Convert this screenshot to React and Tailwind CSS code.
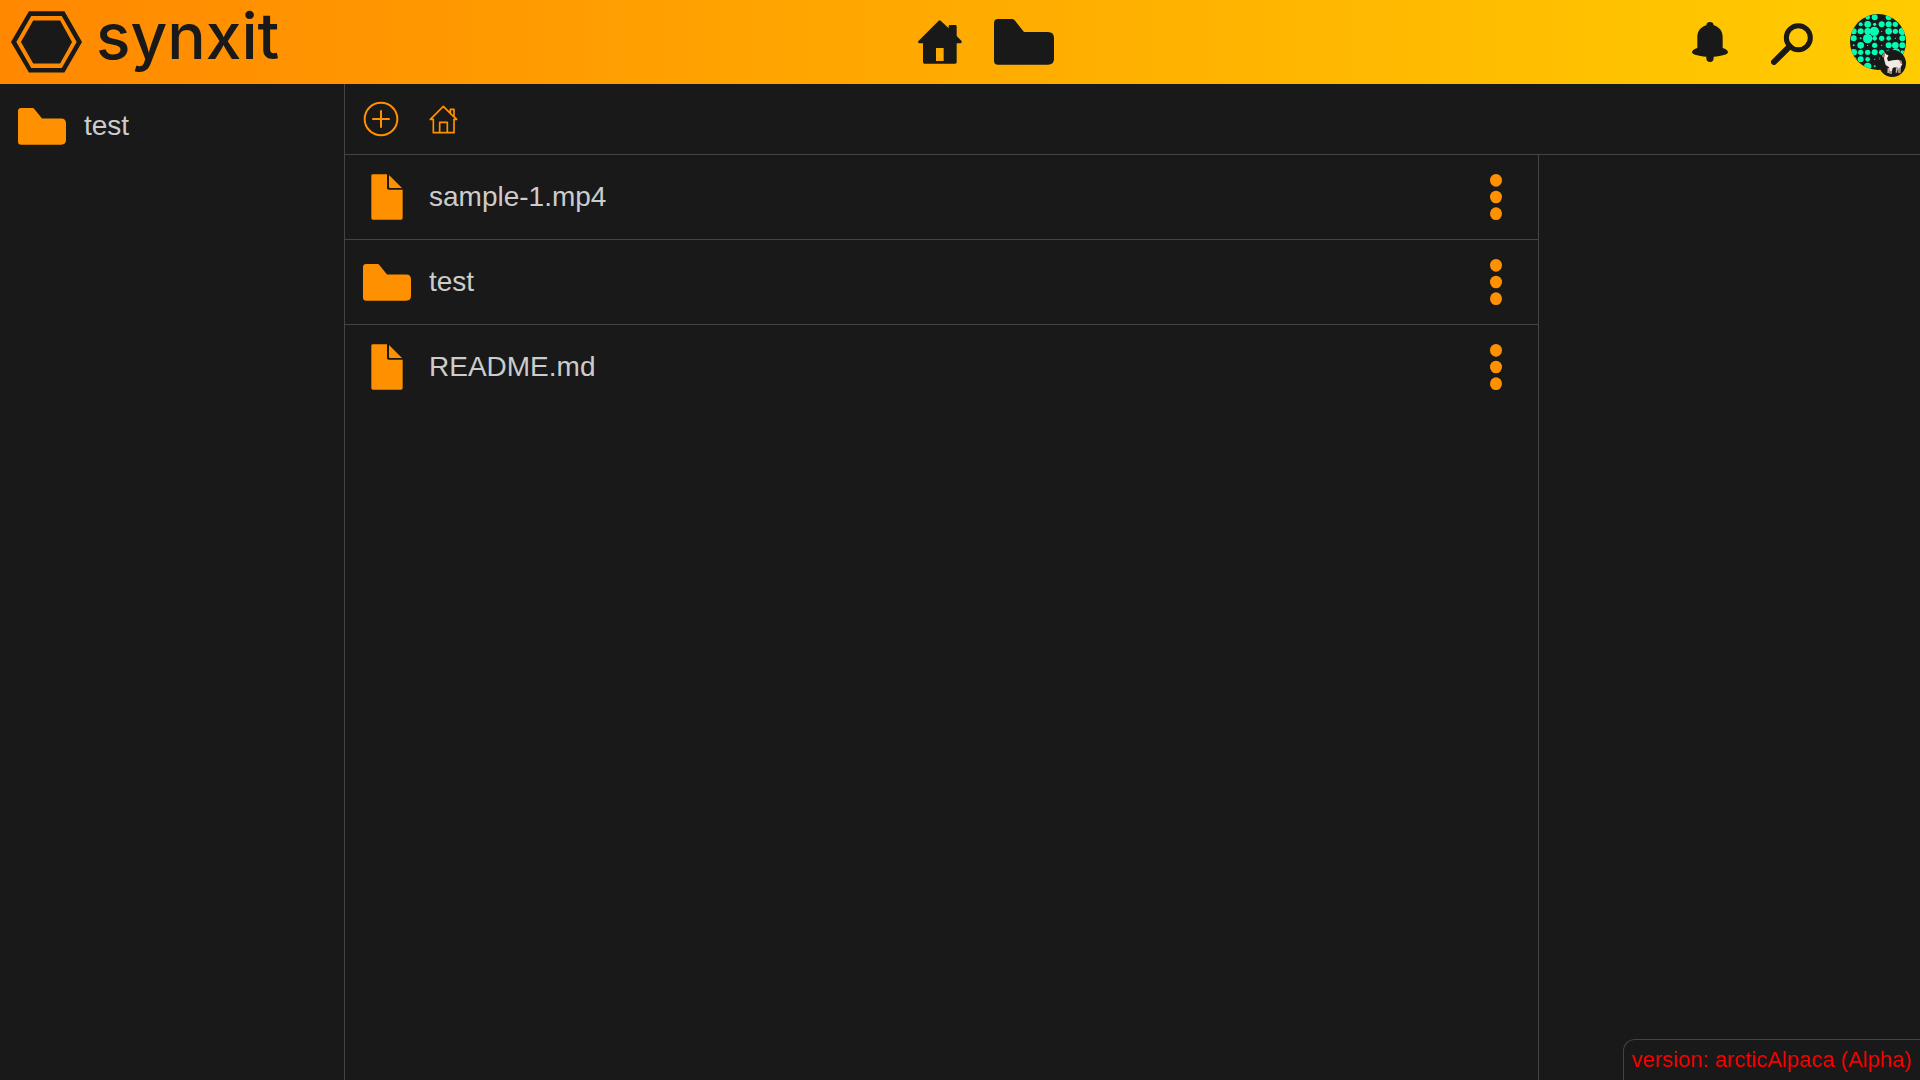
const files = [
  { name: "sample-1.mp4", kind: "file" },
  { name: "test", kind: "folder" },
  { name: "README.md", kind: "file" },
];

function LogoMark() {
  return (
    <svg viewBox="32 31 214 186" className="h-[62px] w-[71px]" fill="#191919" aria-hidden="true">
      <path fillRule="evenodd" d="M32 124 86 31H193L246 124 193 216H86ZM48 124 93 202H185L230 124 185 46H93Z" />
      <path d="M62 124 99 59H180L216 124 180 189H99Z" />
    </svg>
  );
}

function FolderIcon({ className }) {
  return (
    <svg viewBox="0 0 180 138" className={className} fill="currentColor" aria-hidden="true">
      <path d="M12 0H54Q59 0 62 4L90 39H162Q180 39 180 57V120Q180 137 162 137H12Q0 137 0 125V12Q0 0 12 0Z" />
    </svg>
  );
}

function FileIcon() {
  return (
    <svg viewBox="0 0 96 138" className="h-[46px] w-8" fill="currentColor" aria-hidden="true">
      <path d="M5 1H48V42Q48 47 53 47H95V132Q95 137 90 137H6Q1 137 1 132V5Q1 1 5 1Z" />
      <path d="M54 3 93 42H57Q54 42 54 39Z" />
    </svg>
  );
}

function HomeSolidIcon() {
  return (
    <svg viewBox="0 0 132 132" className="size-11" fill="currentColor" aria-hidden="true">
      <path
        fillRule="evenodd"
        d="M62 2Q65 -1 68 2L92 25V19Q92 15 96 15H112Q116 15 116 19V48L130 62Q134 69 127 70H116V127Q116 131 112 131H19Q15 131 15 127V70H4Q-3 68 2 62ZM54 84V123H77V84Z"
      />
    </svg>
  );
}

function HomeOutlineIcon() {
  return (
    <svg viewBox="0 0 87 87" className="size-[29px]" fill="none" stroke="currentColor" strokeWidth="5" strokeLinejoin="round" aria-hidden="true">
      <path d="M43 4 4 43H13V83H75V43H83L75 35V13H64V25Z" />
      <path d="M64 25 75 36M32 83V52H55V83" />
    </svg>
  );
}

function AddIcon() {
  return (
    <svg viewBox="0 0 108 108" className="size-9" fill="none" stroke="currentColor" strokeWidth="6" strokeLinecap="round" aria-hidden="true">
      <circle cx="54" cy="54" r="49" />
      <path d="M54 30V78M30 54H78" />
    </svg>
  );
}

function BellIcon() {
  return (
    <svg viewBox="0 0 108 120" className="h-10 w-9" fill="currentColor" aria-hidden="true">
      <path d="M43 10Q44 0 54 0T65 10C84 16 92 29 92 46V78C101 80 108 85 108 91C108 97 90 103 65 104V109Q65 120 54 120T43 109V104C18 103 0 97 0 91C0 85 7 80 16 78V46C16 29 24 16 43 10Z" />
    </svg>
  );
}

function SearchIcon() {
  return (
    <svg viewBox="0 0 126 126" className="size-[42px]" fill="none" stroke="currentColor" aria-hidden="true">
      <circle cx="82" cy="44" r="36" strokeWidth="15" />
      <path d="M56 70 9 117" strokeWidth="18" strokeLinecap="round" />
    </svg>
  );
}

function MoreIcon() {
  return (
    <svg viewBox="0 0 36 138" className="h-[46px] w-3" fill="currentColor" aria-hidden="true">
      <ellipse cx="18" cy="19" rx="18" ry="19" />
      <ellipse cx="18" cy="69" rx="18" ry="19" />
      <ellipse cx="18" cy="119" rx="18" ry="19" />
    </svg>
  );
}

const dots = [
  [83, 37, 7], [104, 37, 9], [146, 37, 9], [166, 37, 7],
  [41, 58, 7], [62, 58, 6], [83, 58, 10], [104, 58, 5], [125, 58, 9], [146, 58, 9], [166, 58, 8], [187, 58, 5],
  [41, 79, 9], [62, 79, 9], [83, 79, 10], [103, 79, 14], [125, 79, 2], [146, 79, 10], [166, 79, 8], [187, 79, 11],
  [41, 100, 9], [62, 100, 3], [83, 101, 14], [104, 100, 7], [125, 100, 8], [146, 100, 7], [166, 100, 2], [187, 100, 9],
  [41, 121, 3], [62, 121, 10], [83, 121, 2], [104, 121, 8], [125, 121, 2], [146, 121, 9], [166, 121, 10], [187, 121, 9],
  [41, 142, 10], [62, 142, 8], [83, 142, 8], [104, 142, 9], [125, 142, 8], [146, 142, 8], [168, 142, 12], [187, 142, 6],
  [41, 163, 8], [62, 163, 9], [83, 163, 7], [104, 163, 2], [125, 163, 8],
  [62, 184, 4], [83, 184, 11], [104, 184, 3],
];

function Avatar() {
  return (
    <svg viewBox="30 27 168 189" className="h-[63px] w-14" aria-hidden="true">
      <defs>
        <clipPath id="avatar-circle">
          <circle cx="114" cy="111" r="84" />
        </clipPath>
      </defs>
      <circle cx="114" cy="111" r="84" fill="#191919" />
      <g clipPath="url(#avatar-circle)" fill="#00ffb3">
        {dots.map(([x, y, r]) => (
          <circle key={`${x}-${y}`} cx={x} cy={y} r={r} />
        ))}
      </g>
      <circle cx="157" cy="175" r="41" fill="#191919" />
      <path fill="#f3e9e4" d="M130 150 134 142 138 148 145 151 144 156 141 158 144 169 158 166 174 164 184 169 187 178 182 186 181 204H176L174 188 162 187 157 191 155 206H149L147 187 137 180 133 166Z" />
      <path fill="#a98672" d="M126 151 130 148 132 139 136 146 134 157 127 156ZM177 164 185 167 187 177 182 176ZM176 190 181 188 181 205H175ZM150 198H156L155 207H149Z" />
      <path fill="#c9b3a8" d="M143 188 148 190 147 204H142ZM168 188 174 189 171 203H167Z" />
    </svg>
  );
}

function Header() {
  return (
    <header className="flex h-[84px] shrink-0 items-center justify-between bg-linear-to-r from-[#ff8800] to-[#ffcc00] pr-3.5 pl-[11px] text-[#191919]">
      <a href="#home" className="flex items-center gap-3.5">
        <LogoMark />
        <span className="pb-3 font-['Inter',sans-serif] text-[64px] leading-[72px] font-medium">synxit</span>
      </a>
      <nav className="flex items-center gap-8">
        <a href="#home" aria-label="Home"><HomeSolidIcon /></a>
        <a href="#files" aria-label="Files"><FolderIcon className="h-[46px] w-[60px]" /></a>
      </nav>
      <div className="flex items-center">
        <button type="button" aria-label="Notifications" className="mr-[43px]"><BellIcon /></button>
        <button type="button" aria-label="Search" className="mr-[37px] pt-1"><SearchIcon /></button>
        <button type="button" aria-label="Account" className="pt-1.5"><Avatar /></button>
      </div>
    </header>
  );
}

export default function App() {
  return (
    <div className="flex min-h-screen flex-col bg-[#191919] font-['Liberation_Sans',Arial,sans-serif] text-[28px] text-[#cccccc]">
      <Header />
      <div className="flex grow">
        <aside className="w-[345px] shrink-0 border-r border-[#444444]">
          <a href="#test" className="flex h-[84px] items-center gap-[18px] pl-[18px]">
            <FolderIcon className="h-[37px] w-12 text-[#ff9100]" />
            <span>test</span>
          </a>
        </aside>
        <main className="flex grow flex-col">
          <div className="flex h-[71px] items-center gap-[30px] border-b border-[#444444] pl-[18px] text-[#ff9100]">
            <button type="button" aria-label="Add"><AddIcon /></button>
            <button type="button" aria-label="Root folder"><HomeOutlineIcon /></button>
          </div>
          <div className="flex grow">
            <ul className="grow divide-y divide-[#444444]">
              {files.map(({ name, kind }) => (
                <li key={name} className="flex h-[85px] items-center pr-9 pl-[18px] last:h-[84px]">
                  <a href={`#${name}`} className="flex grow items-center gap-[18px]">
                    <span className="flex w-12 justify-center text-[#ff9100]">
                      {kind === "folder" ? <FolderIcon className="h-[37px] w-12" /> : <FileIcon />}
                    </span>
                    <span>{name}</span>
                  </a>
                  <button type="button" aria-label={`Actions for ${name}`} className="text-[#ff9100]"><MoreIcon /></button>
                </li>
              ))}
            </ul>
            <aside className="w-[382px] shrink-0 border-l border-[#444444]" />
          </div>
        </main>
      </div>
      <footer className="fixed right-0 bottom-0 rounded-tl-xl border-t border-l border-[#444444] px-2 pt-1 pb-1 text-[22px] leading-8 text-[#ff0000]">
        version: arcticAlpaca (Alpha)
      </footer>
    </div>
  );
}
